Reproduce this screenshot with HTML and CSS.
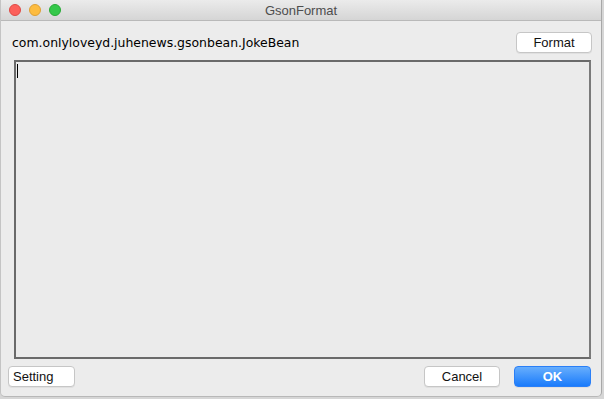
FILE: index.html
```html
<!DOCTYPE html>
<html lang="en">
<head>
    <meta charset="UTF-8">
    <title>GsonFormat</title>
    <link rel="stylesheet" href="styles.css">
</head>
<body>
    <div class="window">
        <div class="titlebar">
            <div class="lights">
                <span class="light close"></span>
                <span class="light min"></span>
                <span class="light max"></span>
            </div>
            <div class="title">GsonFormat</div>
        </div>
        <div class="content">
            <div class="top-row">
                <span class="class-name">com.onlyloveyd.juhenews.gsonbean.JokeBean</span>
                <button class="btn btn-format">Format</button>
            </div>
            <div class="editor"><span class="caret"></span></div>
            <div class="bottom-row">
                <button class="btn btn-setting">Setting</button>
                <div class="actions">
                    <button class="btn btn-cancel">Cancel</button>
                    <button class="btn btn-ok">OK</button>
                </div>
            </div>
        </div>
    </div>
</body>
</html>
```

FILE: styles.css
```css
html, body {
    margin: 0;
    padding: 0;
    background: #d6d6d6;
}
body {
    width: 604px;
    height: 399px;
    overflow: hidden;
    font-family: "Liberation Sans", Arial, sans-serif;
}
.window {
    width: 602px;
    height: 397px;
    background: #ececec;
    border-left: 1px solid #c4c4c4;
    border-right: 1px solid #a8a8a8;
    border-bottom: 1px solid #b8b8b8;
    box-sizing: border-box;
    border-radius: 0 0 5px 5px;
    display: flex;
    flex-direction: column;
}
.titlebar {
    height: 21px;
    box-sizing: border-box;
    background: linear-gradient(#ebebeb, #d5d5d5);
    border-bottom: 1px solid #b9b9b9;
    position: relative;
    display: flex;
    align-items: center;
    justify-content: center;
}
.lights {
    position: absolute;
    left: 8px;
    top: 4px;
    display: flex;
    gap: 8px;
}
.light {
    width: 12px;
    height: 12px;
    border-radius: 50%;
    box-sizing: border-box;
}
.close { background: #fc605b; border: 1px solid #de4a45; }
.min { background: #fdbc40; border: 1px solid #dea034; }
.max { background: #34c84a; border: 1px solid #27aa35; }
.title {
    font-size: 13px;
    color: #4d4d4d;
}
.content {
    flex: 1;
    display: flex;
    flex-direction: column;
    padding: 10px 9px 9px 11px;
}
.top-row {
    display: flex;
    align-items: center;
    justify-content: space-between;
    height: 22px;
}
.class-name {
    font-family: "DejaVu Sans", sans-serif;
    font-size: 12.45px;
    color: #000;
}
.btn {
    font-family: "Liberation Sans", Arial, sans-serif;
    font-size: 13px;
    color: #111;
    background: #fff;
    border: 1px solid #c6c6c6;
    border-radius: 4px;
    height: 21px;
    padding: 0;
    box-shadow: 0 1px 0 rgba(0, 0, 0, 0.05);
}
.btn-format {
    width: 76px;
}
.editor {
    margin: 7px 1px 7px 2px;
    flex: 1;
    border: 2px solid #6a6a6a;
    border-right-color: #7a7a7a;
    background: #ebebeb;
    position: relative;
}
.caret {
    position: absolute;
    left: 1px;
    top: 2px;
    width: 1px;
    height: 14px;
    background: #000;
}
.bottom-row {
    display: flex;
    justify-content: space-between;
    align-items: center;
}
.btn-setting {
    width: 67px;
    margin-left: -4px;
    text-align: left;
    padding-left: 4px;
}
.actions {
    display: flex;
    gap: 14px;
    margin-right: 1px;
}
.btn-cancel {
    width: 76px;
}
.btn-ok {
    width: 77px;
    color: #fff;
    font-weight: bold;
    border-color: #2a7ff7;
    background: linear-gradient(#67aefd, #1a7bfb);
}
```
